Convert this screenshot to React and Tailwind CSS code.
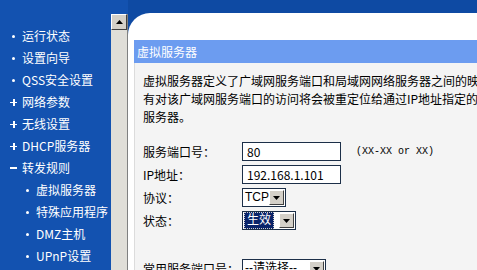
import React from "react";

const menu = [
    { label: "运行状态", mark: "dot" },
    { label: "设置向导", mark: "dot" },
    { label: "QSS安全设置", mark: "dot" },
    { label: "网络参数", mark: "plus" },
    { label: "无线设置", mark: "plus" },
    { label: "DHCP服务器", mark: "plus" },
    { label: "转发规则", mark: "minus" },
    { label: "虚拟服务器", mark: "dot", sub: true },
    { label: "特殊应用程序", mark: "dot", sub: true },
    { label: "DMZ主机", mark: "dot", sub: true },
    { label: "UPnP设置", mark: "dot", sub: true },
];

const cjk = { fontFamily: '"Noto Sans CJK SC", "Noto Sans", sans-serif' };

function Mark({ type }) {
    if (type === "plus") {
        return (
            <span className="relative mr-[5px] h-[7px] w-[7px] shrink-0">
                <span className="absolute left-0 top-[3px] h-[1.5px] w-[7px] bg-white" />
                <span className="absolute left-[3px] top-0 h-[7px] w-[1.5px] bg-white" />
            </span>
        );
    }
    if (type === "minus") {
        return <span className="mr-[5px] h-[2px] w-[7px] shrink-0 bg-white" />;
    }
    return (
        <span className="mr-[5px] flex h-[7px] w-[7px] shrink-0 items-center justify-center">
            <span className="h-[3px] w-[3px] rounded-full bg-white" />
        </span>
    );
}

function SelectBox({ value, width, selected }) {
    return (
        <div
            className="flex h-[19px] shrink-0 items-center border border-[#1c2f48] bg-white"
            style={{ width }}
        >
            <div className="flex flex-1 items-center overflow-hidden whitespace-nowrap pl-[1px]">
                <span
                    className={`px-[1px] text-[12px] leading-[15px] ${selected ? "border border-dotted border-[#d0d0d0] bg-[#0a246a] px-[2px] text-white" : "text-black"}`}
                    style={{ fontFamily: '"Liberation Sans", "Noto Sans CJK SC", sans-serif' }}
                >
                    {value}
                </span>
            </div>
            <div className="mr-[1px] flex h-[15px] w-[15px] shrink-0 items-center justify-center border border-t-white border-l-white border-r-[#404040] border-b-[#404040] bg-[#d4d0c8]">
                <svg width="7" height="4" viewBox="0 0 7 4">
                    <path d="M0 0h7L3.5 4z" fill="#000" />
                </svg>
            </div>
        </div>
    );
}

function TextBox({ value }) {
    return (
        <div className="flex h-[19px] w-[99px] shrink-0 items-center border border-[#1c2f48] bg-white pl-[4px] text-[12px] text-black">
            {value}
        </div>
    );
}

export default function App() {
    return (
        <div
            className="flex h-[270px] w-[477px] overflow-hidden bg-[#1352b0] text-[12px]"
            style={cjk}
        >
            <div className="flex w-[111px] shrink-0 flex-col pt-[25px] text-white">
                {menu.map((item) => (
                    <div
                        key={item.label}
                        className={`flex h-[22px] items-center whitespace-nowrap ${item.sub ? "pl-[24px]" : "pl-[10px]"}`}
                    >
                        <Mark type={item.mark} />
                        <span>{item.label}</span>
                    </div>
                ))}
            </div>

            <div className="flex w-[17px] shrink-0 flex-col pt-[14px]">
                <div className="flex flex-1 flex-col border-r border-[#808080] bg-[#e0ded8]">
                    <div className="flex h-[16px] items-center justify-center border border-t-white border-l-white border-r-[#404040] border-b-[#404040] bg-[#d4d0c8]">
                        <svg width="7" height="4" viewBox="0 0 7 4">
                            <path d="M3.5 0L7 4H0z" fill="#000" />
                        </svg>
                    </div>
                </div>
            </div>

            <div className="flex min-w-0 flex-1 flex-col bg-[#0e4aa3] pt-[13px]">
                <div className="flex flex-1 flex-col overflow-hidden rounded-tl-[22px] bg-white pl-[6px] pt-[27px]">
                    <div className="flex h-[23px] shrink-0 items-center bg-[#6c9cf0] pl-[3px] text-[12px] text-white">
                        虚拟服务器
                    </div>
                    <div className="flex-1 border-l border-[#dcdcdc] bg-[#f4f4f4] pl-[8px] pt-[9px] text-black">
                        <p className="w-[400px] whitespace-nowrap leading-[18px]">
                            虚拟服务器定义了广域网服务端口和局域网网络服务器之间的映射关系，所
                            <br />
                            有对该广域网服务端口的访问将会被重定位给通过IP地址指定的局域网
                            <br />
                            服务器。
                        </p>

                        <div className="mt-[16px] flex flex-col gap-[4px]">
                            <div className="flex h-[19px] items-center whitespace-nowrap">
                                <span className="w-[99px] shrink-0">服务端口号：</span>
                                <TextBox value="80" />
                                <span
                                    className="ml-[15px] text-[10px]"
                                    style={{ fontFamily: '"Liberation Mono", monospace' }}
                                >
                                    (XX-XX or XX)
                                </span>
                            </div>
                            <div className="flex h-[19px] items-center whitespace-nowrap">
                                <span className="w-[99px] shrink-0">IP地址：</span>
                                <TextBox value="192.168.1.101" />
                            </div>
                            <div className="flex h-[19px] items-center whitespace-nowrap">
                                <span className="w-[99px] shrink-0">协议：</span>
                                <SelectBox value="TCP" width={44} />
                            </div>
                            <div className="flex h-[19px] items-center whitespace-nowrap">
                                <span className="w-[99px] shrink-0">状态：</span>
                                <SelectBox value="生效" width={54} selected />
                            </div>
                            <div className="mt-[25px] flex h-[19px] items-center whitespace-nowrap">
                                <span className="w-[99px] shrink-0">常用服务端口号：</span>
                                <SelectBox value="--请选择--" width={84} />
                            </div>
                        </div>
                    </div>
                </div>
            </div>
        </div>
    );
}
